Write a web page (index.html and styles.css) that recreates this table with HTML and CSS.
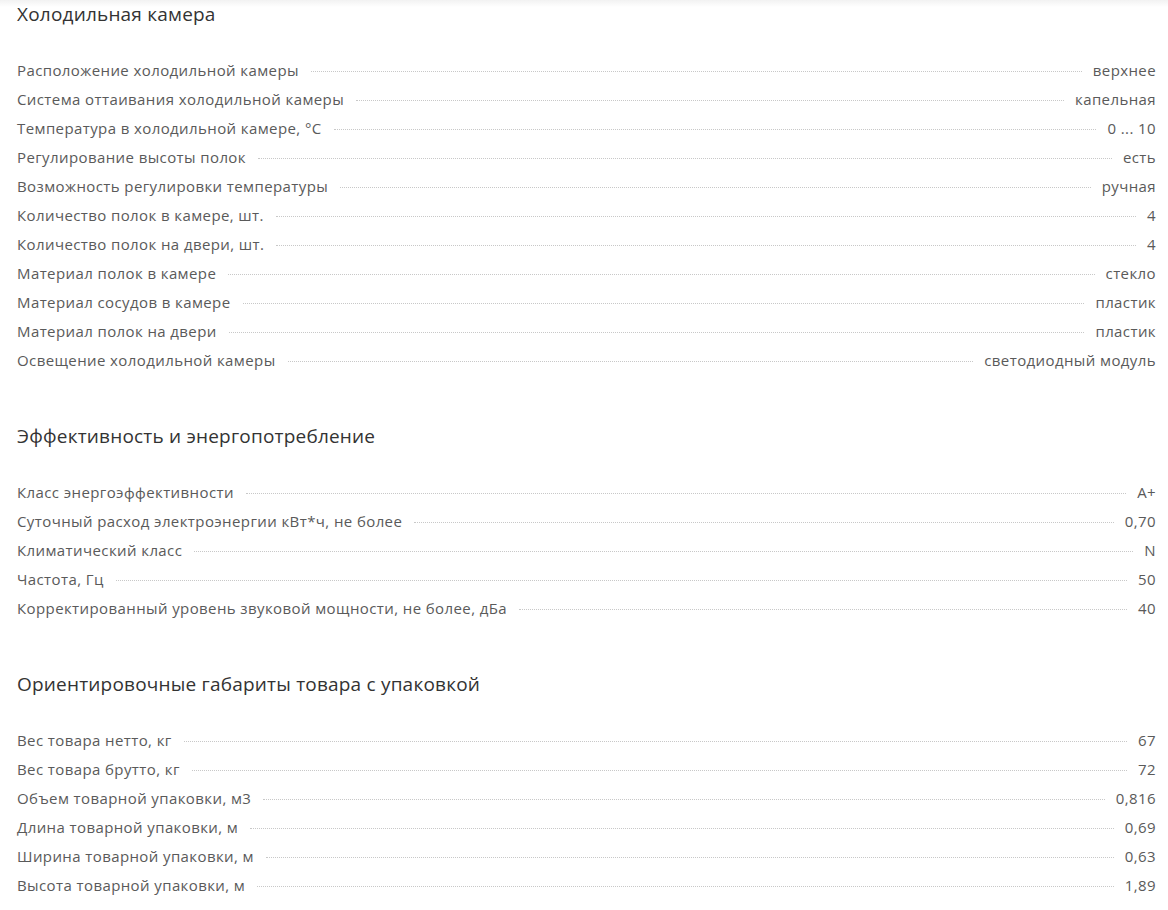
FILE: index.html
```html
<!DOCTYPE html>
<html lang="ru">
<head>
    <meta charset="UTF-8">
    <meta name="viewport" content="width=device-width, initial-scale=1.0">
    <title>Характеристики</title>
    <link rel="stylesheet" href="styles.css">
</head>
<body>
    <div class="specs">
        <div class="section">
            <h3>Холодильная камера</h3>
            <div class="row"><span class="name">Расположение холодильной камеры</span><span class="dots"></span><span class="value">верхнее</span></div>
            <div class="row"><span class="name">Система оттаивания холодильной камеры</span><span class="dots"></span><span class="value">капельная</span></div>
            <div class="row"><span class="name">Температура в холодильной камере, °C</span><span class="dots"></span><span class="value">0 ... 10</span></div>
            <div class="row"><span class="name">Регулирование высоты полок</span><span class="dots"></span><span class="value">есть</span></div>
            <div class="row"><span class="name">Возможность регулировки температуры</span><span class="dots"></span><span class="value">ручная</span></div>
            <div class="row"><span class="name">Количество полок в камере, шт.</span><span class="dots"></span><span class="value">4</span></div>
            <div class="row"><span class="name">Количество полок на двери, шт.</span><span class="dots"></span><span class="value">4</span></div>
            <div class="row"><span class="name">Материал полок в камере</span><span class="dots"></span><span class="value">стекло</span></div>
            <div class="row"><span class="name">Материал сосудов в камере</span><span class="dots"></span><span class="value">пластик</span></div>
            <div class="row"><span class="name">Материал полок на двери</span><span class="dots"></span><span class="value">пластик</span></div>
            <div class="row"><span class="name">Освещение холодильной камеры</span><span class="dots"></span><span class="value">светодиодный модуль</span></div>
        </div>

        <div class="section">
            <h3>Эффективность и энергопотребление</h3>
            <div class="row"><span class="name">Класс энергоэффективности</span><span class="dots"></span><span class="value">A+</span></div>
            <div class="row"><span class="name">Суточный расход электроэнергии кВт*ч, не более</span><span class="dots"></span><span class="value">0,70</span></div>
            <div class="row"><span class="name">Климатический класс</span><span class="dots"></span><span class="value">N</span></div>
            <div class="row"><span class="name">Частота, Гц</span><span class="dots"></span><span class="value">50</span></div>
            <div class="row"><span class="name">Корректированный уровень звуковой мощности, не более, дБа</span><span class="dots"></span><span class="value">40</span></div>
        </div>

        <div class="section">
            <h3>Ориентировочные габариты товара с упаковкой</h3>
            <div class="row"><span class="name">Вес товара нетто, кг</span><span class="dots"></span><span class="value">67</span></div>
            <div class="row"><span class="name">Вес товара брутто, кг</span><span class="dots"></span><span class="value">72</span></div>
            <div class="row"><span class="name">Объем товарной упаковки, м3</span><span class="dots"></span><span class="value">0,816</span></div>
            <div class="row"><span class="name">Длина товарной упаковки, м</span><span class="dots"></span><span class="value">0,69</span></div>
            <div class="row"><span class="name">Ширина товарной упаковки, м</span><span class="dots"></span><span class="value">0,63</span></div>
            <div class="row"><span class="name">Высота товарной упаковки, м</span><span class="dots"></span><span class="value">1,89</span></div>
        </div>
    </div>
</body>
</html>
```

FILE: styles.css
```css
body {
    font-family: 'Open Sans', sans-serif;
    background-color: #fff;
    color: #555;
    margin: 0;
    padding: 0;
}

.specs {
    padding: 0 12px 0 17px;
    background: linear-gradient(to bottom, #f2f2f2 0, #fff 7px);
}

.section {
    margin-bottom: 48px;
}

.section h3 {
    font-size: 19px;
    font-weight: 400;
    line-height: 28px;
    letter-spacing: 0.2px;
    color: #333;
    margin: 0 0 27px 0;
}

.row {
    display: flex;
    align-items: center;
    height: 29px;
    font-size: 15px;
    letter-spacing: 0.4px;
    color: #5a5a5a;
}

.row .dots {
    flex: 1;
    margin: 3px 11px 0 12px;
    border-bottom: 1px dotted #c8c8c8;
}

.row .value {
    text-align: right;
}
```
